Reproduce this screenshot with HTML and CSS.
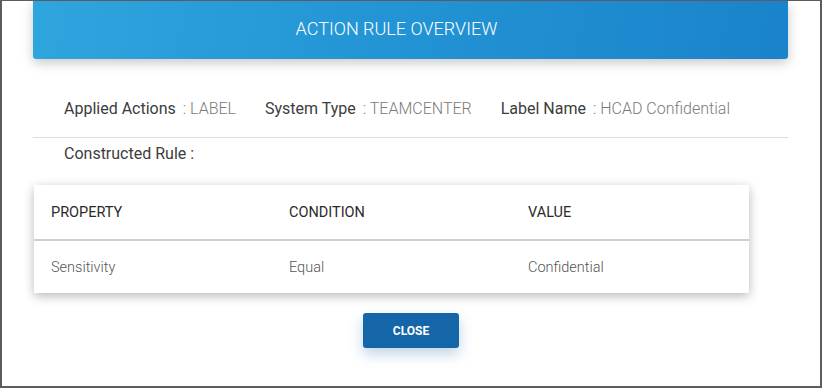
FILE: index.html
```html
<!DOCTYPE html>
<html>
<head>
<meta charset="utf-8">
<link rel="stylesheet" href="styles.css">
</head>
<body>
<div class="dialog">
  <div class="header">ACTION RULE OVERVIEW</div>
  <div class="info">
    <div class="item"><span class="lbl">Applied Actions</span><span class="val">: LABEL</span></div>
    <div class="item"><span class="lbl">System Type</span><span class="val">: TEAMCENTER</span></div>
    <div class="item"><span class="lbl">Label Name</span><span class="val">: HCAD Confidential</span></div>
  </div>
  <div class="divider"></div>
  <div class="rule-title">Constructed Rule :</div>
  <div class="table">
    <div class="row head">
      <div class="cell">PROPERTY</div>
      <div class="cell">CONDITION</div>
      <div class="cell">VALUE</div>
    </div>
    <div class="row body">
      <div class="cell">Sensitivity</div>
      <div class="cell">Equal</div>
      <div class="cell">Confidential</div>
    </div>
  </div>
  <div class="actions">
    <button class="close">CLOSE</button>
  </div>
</div>
</body>
</html>
```
FILE: styles.css
```css
* { box-sizing: border-box; }
html, body { margin: 0; padding: 0; background: #fff; }
body { font-family: Roboto, "Liberation Sans", sans-serif; }
.dialog {
  width: 822px;
  height: 388px;
  border: 2px solid #5c5c5c;
  border-top-width: 1px;
  background: #fff;
  padding: 0 32px 0 31px;
  overflow: hidden;
}
.header {
  height: 58px;
  background: linear-gradient(100deg, #2fa5de 0%, #2293d4 50%, #1a83cb 100%);
  color: #fff;
  font-size: 18px;
  font-weight: 300;
  display: flex;
  align-items: center;
  justify-content: center;
  padding-right: 28px;
  padding-bottom: 3px;
  border-radius: 0 0 3px 3px;
  box-shadow: 0 4px 12px rgba(0,0,0,0.22);
}
.info {
  display: flex;
  gap: 29px;
  padding: 40px 0 0 31px;
  height: 78px;
  font-size: 16px;
}
.item { display: flex; gap: 7px; }
.lbl { color: #3c3c3c; }
.val { color: #7a7a7a; font-weight: 300; }
.divider { height: 1px; background: #dedede; }
.rule-title {
  padding: 6px 0 0 31px;
  height: 47px;
  font-size: 16px;
  color: #3c3c3c;
}
.table {
  width: 715px;
  margin-left: 1px;
  background: #fff;
  box-shadow: 0 3px 10px rgba(0,0,0,0.28);
}
.row { display: flex; }
.row.head { height: 56px; border-bottom: 2px solid #cfcfcf; font-size: 14.5px; color: #2a2a2a; }
.row.body { height: 52px; font-size: 14.5px; color: #555; font-weight: 300; }
.cell { display: flex; align-items: center; }
.cell:nth-child(1) { width: 255px; padding-left: 17px; }
.cell:nth-child(2) { width: 239px; }
.cell:nth-child(3) { flex: 1; }
.actions { display: flex; justify-content: center; padding-top: 20px; padding-left: 1px; }
.close {
  width: 96px;
  height: 35px;
  border: none;
  border-radius: 3px;
  background: #1566a8;
  color: #fff;
  font-family: Roboto, "Liberation Sans", sans-serif;
  font-size: 12px;
  font-weight: 700;
  box-shadow: 0 6px 14px rgba(21,102,168,0.28);
}
```
